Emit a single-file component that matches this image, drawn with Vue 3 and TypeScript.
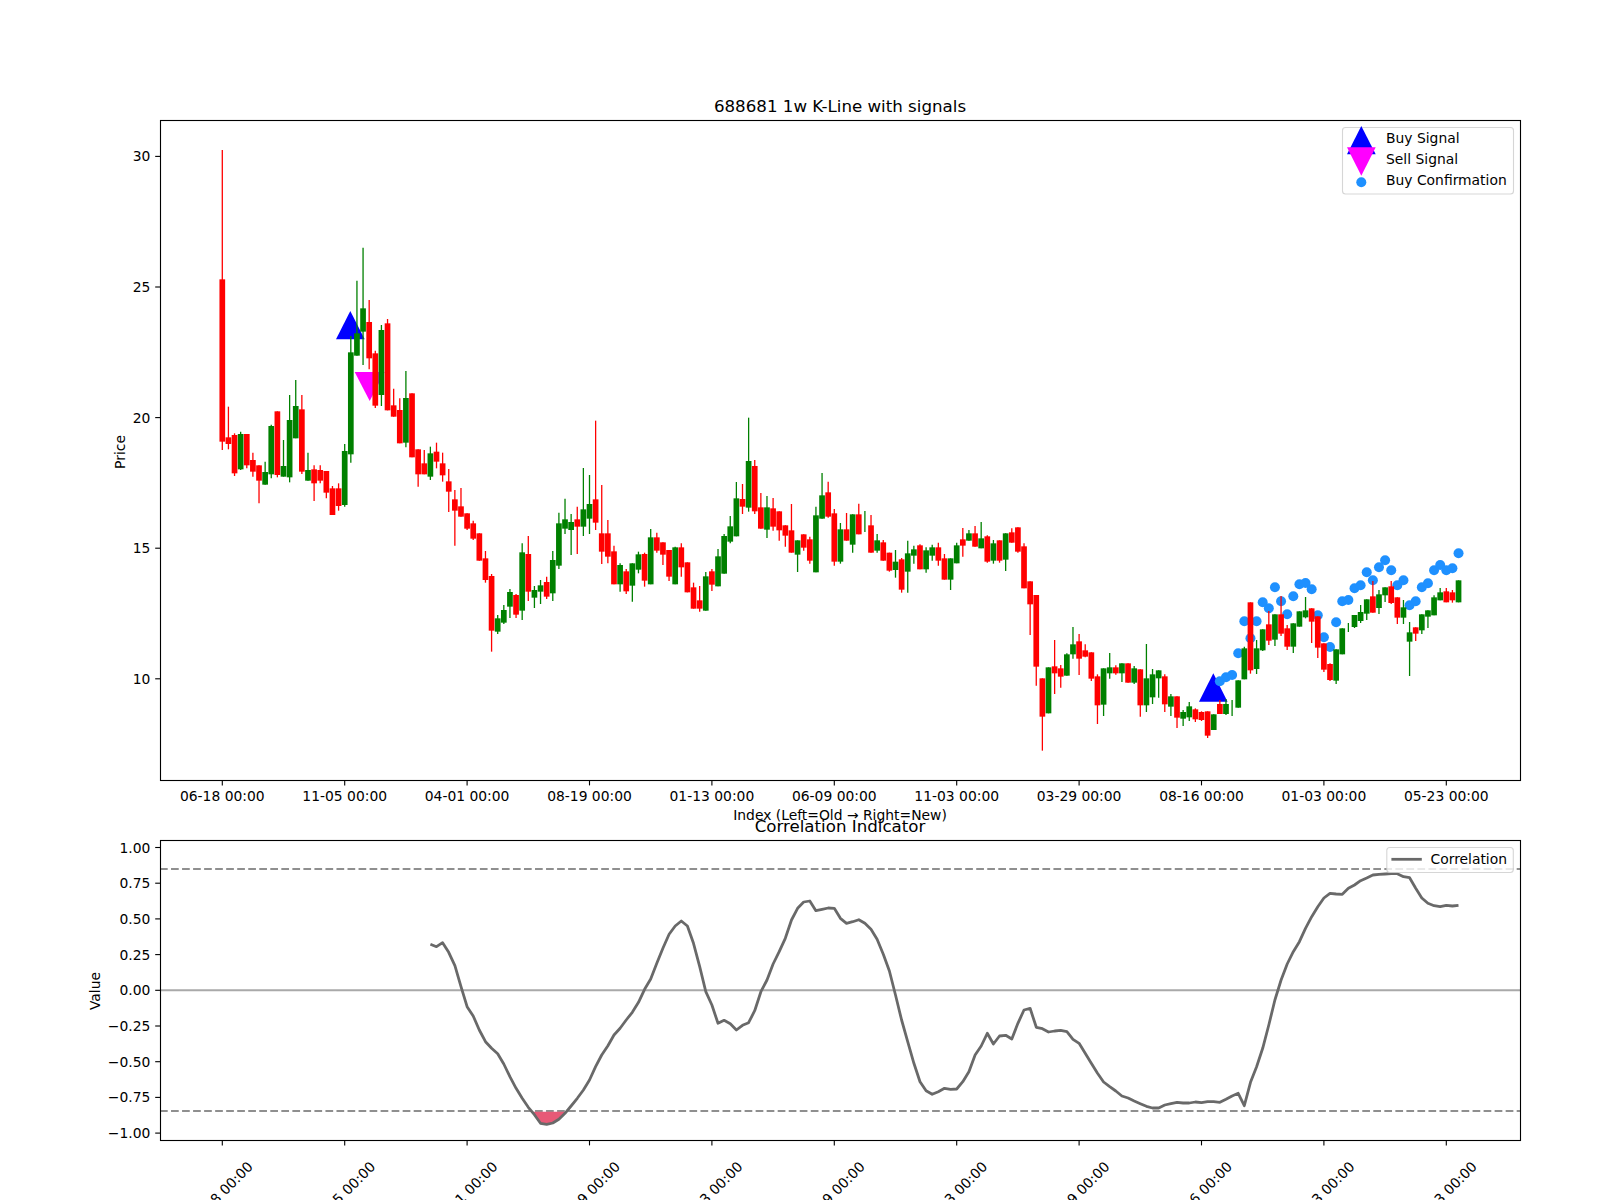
<script setup lang="ts">
type Candle = { x: number; up: boolean; top: number; bottom: number; wickTop: number; wickBottom: number }

const X0 = 222.3
const STEP = 6.12
const xAt = (i: number) => X0 + STEP * i

// Each block: first candle index, vertical origin, rows of "colour bodyTop bodyBottom wickTop wickBottom" (3x units)
const blocks: [number, number, string][] = [
  [0, 120, `r 478 965 90 990,r 952 972 860 988,r 945 1060 940 1068,g 942 1048 935 1050,r 942 1036 942 1045,r 1020 1055 998 1070,r 1036 1082 1036 1150,g 1056 1094 1025 1094,g 918 1063 914 1075,r 874 1065 874 1072,g 1038 1070 960 1070,g 900 1072 825 1087,g 858 955 780 955,r 868 1055 825 1062,g 1050 1082 998 1082,r 1048 1090 1036 1143,r 1050 1082 1036 1090,r 1053 1118 1053 1135,r 1105 1185 1098 1185,r 1105 1158 1090 1172,g 993 1155 972 1160,g 697 1003 648 1028,g 640 707 482 707,g 565 635 383 735,r 606 715 540 748,r 700 857 692 864,g 630 825 615 858,r 610 871 597 871,r 856 890 806 890,r 870 970 835 970,g 834 968 753 982,r 820 1012 820 1012,r 988 1063 988 1100,r 1030 1063 990 1063,g 1000 1070 980 1080,r 995 1025 968 1045,r 1030 1066 998 1085,r 1084 1115 1047 1176,r 1138 1172 1110 1277,r 1159 1190 1104 1190`],
  [40, 380, `r 400 446 400 450,r 430 476 422 480`],
  [42, 400, `r 400 482 400 482,r 475 540 453 548,r 528 692 522 755,g 655 695 645 702,g 630 668 615 672,g 576 620 567 654,r 585 644 582 654,g 457 632 430 660,r 462 575 408 603,g 570 593 558 624,g 556 575 540 612,r 546 590 530 597,g 480 580 453 603,g 370 497 338 507,g 358 386 296 402,g 366 390 342 465,r 358 380 320 462,g 328 380 204 408,g 312 356 225 402,r 298 368 62 390,r 400 455 255 492,r 400 470 360 490,r 454 553 437 553,g 495 553 490 575,r 514 574 507 582,g 490 557 490 605,g 463 509 455 520,r 462 542 458 560,g 412 553 387 553,r 412 452 398 458,r 427 464 427 495,r 450 530 450 543,g 442 553 440 553,r 442 502 430 530,r 487 577 487 577,r 562 626 548 626,r 601 626 558 635,g 529 632 516 632,r 514 554 507 573,g 469 559 447 559,g 408 521 402 521,g 379 425 348 430,g 295 409 246 409,r 297 320 252 342,g 183 323 53 335,r 198 334 180 342,r 322 386 279 386,g 322 389 288 414`],
  [90, 400, `r 325 380 294 392,r 334 391 334 422,r 376 407 376 440,r 391 458 312 458,g 421 464 421 516,r 403 443 403 452,r 418 482 410 491,g 346 517 320 517,g 286 356 219 356,r 277 350 245 353,r 340 485 327 497,g 388 485 369 491,r 388 422 339 422,g 343 434 343 458,r 343 403 311 403,g 0 0 333 396,r 376 458 345 458,g 421 452 402 458,r 427 482 420 482,r 458 512 458 515,g 485 510 450 533,r 478 569 474 578,g 460 515 422 578,g 448 467 437 491,r 436 508 433 508,g 451 508 442 518,g 442 467 434 482,r 442 482 428 497,r 475 539 462 539,g 475 539 475 570,g 436 490 428 490,r 418 437 384 470,g 400 422 390 422,r 400 440 378 440,g 415 445 366 445,r 409 485 406 488,g 430 482 420 491,r 421 482 421 488,g 400 479 400 513,r 397 428 385 428,r 382 455 382 458,r 439 565 430 565,r 544 613 544 705`],
  [133, 520, `r 225 440 225 497,r 475 590 475 692,g 442 580 442 580,r 439 460 360 522,r 445 470 435 503,g 403 467 400 467,g 373 403 321 416,r 364 416 342 465,r 391 410 373 412,r 397 476 397 483,r 469 556 463 612,g 445 554 445 588,g 442 460 399 476,r 442 460 436 464,g 430 460 430 486,r 430 488 430 488,g 445 488 438 492,r 448 556 448 590,g 475 556 372 576,g 463 532 447 552,g 451 475 451 533,r 469 553 463 576,g 529 560 522 588,r 529 593 529 624,g 576 596 570 618,g 559 592 546 603,r 568 598 565 606,r 576 600 574 603,r 574 647 574 654`],
  [162, 530, `g 553 600 553 600,r 522 552 510 552,g 522 552 507 555,g 0 0 510 558,g 451 533 451 533,g 355 448 350 448,r 217 421 217 431,g 355 417 330 432,g 298 361 298 363,r 283 332 243 345,g 253 329 253 348,r 253 311 198 318,r 295 350 285 360,g 280 350 280 369,g 244 290 244 290,g 241 262 201 265,r 235 275 235 339,r 259 353 259 384,r 340 419 340 426,r 402 450 400 453,g 358 452 358 462,g 295 373 295 373,g 0 0 279 306,g 255 291 255 294,g 246 273 225 279,g 208 251 208 270,r 199 248 153 248,g 193 234 180 252,g 172 196 172 216,r 169 219 153 222,r 202 263 202 282,g 232 263 210 282,g 307 335 276 438,r 292 311 292 333,g 253 301 253 312,g 241 260 241 294,g 202 256 196 256,g 187 211 174 211,r 184 217 174 217,r 187 211 180 218,g 151 217 151 217`],
]

const candles: Candle[] = blocks.flatMap(([start, oy, rows]) =>
  rows.split(',').map((row, n) => {
    const [c, a, b, d, e] = row.split(' ')
    const flat = a === '0'
    return {
      x: xAt(start + n),
      up: c === 'g',
      top: flat ? 0 : oy + Number(a) / 3,
      bottom: flat ? 0 : oy + Number(b) / 3,
      wickTop: oy + Number(d) / 3,
      wickBottom: oy + Number(e) / 3,
    }
  }),
)

// Buy confirmation markers, one for each candle from index 163
const dotYs = [454, 442, 435, 370, 274, 325, 274, 217, 235, 172, 214, 253, 199, 163, 159, 178, 256, 322, 351, 277, 214, 210, 175, 166, 127, 151, 112, 91, 121, 166, 151, 226, 214, 172, 160, 121, 105, 121, 115, 70]
const dots = dotYs.map((z, n) => ({ x: xAt(163 + n), y: 530 + z / 3 }))

const lineBlocks: [number, number, number[]][] = [
  [34, 770, [523, 530, 518, 547, 587, 650, 710, 738, 780, 815, 835, 851, 882, 920, 955, 985, 1012]],
  [51, 840, [824, 850, 853, 849, 838, 820, 798, 775, 750, 720, 680, 645, 617, 585, 565, 540, 517, 487, 448, 417, 370, 325, 283, 258, 243, 258, 310, 380, 455, 495, 550, 541, 551, 570, 556, 548, 512, 455, 420, 372, 335, 295, 240, 205, 186, 183, 212, 208, 204, 205, 235, 250, 245, 239, 250, 268, 298, 343, 393, 465, 540, 605, 670, 725, 752, 763, 755, 745, 748, 747, 725, 695, 645]],
  [124, 830, [648, 610, 642, 618, 616, 627, 580, 540, 535, 592, 596, 606, 603, 601, 605, 628, 640, 670, 700, 730, 756, 770, 783, 798, 804, 813, 821, 829, 834, 834, 825, 821, 817, 819, 819, 816, 818, 815, 815, 817, 808, 798, 790, 827, 757, 710, 655, 585, 510, 450, 402, 365, 335, 295, 260, 230, 204, 190, 192, 193, 175, 165, 152, 144, 135, 133, 132, 131, 131, 140, 143, 175, 204, 220, 227, 230, 226, 228, 226]],
]
const linePts = lineBlocks.flatMap(([start, oy, ys]) =>
  ys.map((z, n) => ({ i: start + n, x: xAt(start + n), y: oy + z / 3 })),
)
const corrLine = linePts.map((p) => `${p.x.toFixed(1)},${p.y.toFixed(1)}`).join(' ')
const redFill =
  '532.7,1111.7 ' +
  linePts
    .filter((p) => p.i >= 52 && p.i <= 56)
    .map((p) => `${p.x.toFixed(1)},${p.y.toFixed(1)}`)
    .join(' ') +
  ' 566,1111.7'

const dates = ['06-18', '11-05', '04-01', '08-19', '01-13', '06-09', '11-03', '03-29', '08-16', '01-03', '05-23']
const xTicks = dates.map((d, n) => ({ x: xAt(n * 20), label: `${d} 00:00` }))

const priceTicks = [30, 25, 20, 15, 10].map((v) => ({ y: 156.4 + (30 - v) * 26.12, label: String(v) }))
const corrTicks = [1, 0.75, 0.5, 0.25, 0, -0.25, -0.5, -0.75, -1].map((v) => ({
  y: 990.3 - v * 142.8,
  label: (v < 0 ? '\u2212' : '') + Math.abs(v).toFixed(2),
}))
</script>

<template>
  <div class="figure">
    <svg class="plot" width="1600" height="1200" viewBox="0 0 1600 1200">
      <!-- price panel -->
      <g class="markers">
        <polygon class="buy" points="350.3,311 336,339.3 364.7,339.3" />
        <polygon class="sell" points="369.7,401 354.7,372 384.7,372" />
        <polygon class="buy" points="1213.3,673.3 1199,701.7 1227.6,701.7" />
        <circle v-for="(d, n) in dots" :key="n" class="dot" :cx="d.x" :cy="d.y" r="5" />
      </g>
      <g v-for="(c, n) in candles" :key="n" :class="c.up ? 'up' : 'down'">
        <line class="wick" :x1="c.x" :x2="c.x" :y1="c.wickTop" :y2="c.wickBottom" />
        <rect v-if="c.bottom > c.top" class="body" :x="c.x - 2.85" :y="c.top" width="5.7" :height="c.bottom - c.top" />
      </g>

      <rect class="frame" x="160.5" y="120.5" width="1360" height="660" />
      <g v-for="t in xTicks" :key="t.label">
        <line class="tick" :x1="t.x" :x2="t.x" y1="781" y2="785.4" />
        <text class="label mid" :x="t.x" y="801">{{ t.label }}</text>
      </g>
      <g v-for="t in priceTicks" :key="t.label">
        <line class="tick" x1="155.2" x2="160" :y1="t.y" :y2="t.y" />
        <text class="label end" x="150.3" :y="t.y + 5">{{ t.label }}</text>
      </g>
      <text class="title mid" x="840" y="111.7">688681 1w K-Line with signals</text>
      <text class="label mid" x="840" y="820">Index (Left=Old → Right=New)</text>
      <text class="label mid" transform="translate(124.5 452) rotate(-90)">Price</text>

      <g class="legend">
        <rect class="legend-box" x="1342.5" y="127.5" width="171" height="66.5" rx="3" />
        <polygon class="buy" points="1361.3,126 1347,154.3 1375.7,154.3" />
        <polygon class="sell" points="1361.3,175.7 1347,147.3 1375.7,147.3" />
        <circle class="dot" cx="1361.3" cy="182.3" r="5" />
        <text class="label" x="1386" y="143.3">Buy Signal</text>
        <text class="label" x="1386" y="164.3">Sell Signal</text>
        <text class="label" x="1386" y="185">Buy Confirmation</text>
      </g>

      <!-- correlation panel -->
      <line class="zero" x1="160" x2="1520" y1="990.3" y2="990.3" />
      <line class="limit" x1="160" x2="1520" y1="869" y2="869" />
      <line class="limit" x1="160" x2="1520" y1="1111" y2="1111" />
      <polygon class="extreme" :points="redFill" />
      <polyline class="corr" :points="corrLine" />

      <rect class="frame" x="160.5" y="840.5" width="1360" height="300" />
      <g v-for="t in xTicks" :key="'c' + t.label">
        <line class="tick" :x1="t.x" :x2="t.x" y1="1141" y2="1145.4" />
        <text class="label mid" :x="t.x - 2" y="1199" :transform="`rotate(-45 ${t.x - 2} 1194)`">{{ t.label }}</text>
      </g>
      <g v-for="t in corrTicks" :key="t.label">
        <line class="tick" x1="155.2" x2="160" :y1="t.y" :y2="t.y" />
        <text class="label end" x="150.3" :y="t.y + 5">{{ t.label }}</text>
      </g>
      <text class="title mid" x="840" y="832.3">Correlation Indicator</text>
      <text class="label mid" transform="translate(99.5 991) rotate(-90)">Value</text>

      <g class="legend">
        <rect class="legend-box" x="1386.8" y="847.5" width="126.5" height="25" rx="3" />
        <line class="corr" x1="1391.4" x2="1421.8" y1="859.3" y2="859.3" />
        <text class="label" x="1430.5" y="864">Correlation</text>
      </g>
    </svg>
  </div>
</template>

<style scoped>
.figure {
  width: 1600px;
  height: 1200px;
  background: #ffffff;
  overflow: hidden;
}
.plot {
  display: block;
}
.label,
.title {
  font-family: "DejaVu Sans", sans-serif;
  fill: #000000;
}
.label {
  font-size: 13.89px;
}
.title {
  font-size: 16.67px;
}
.mid {
  text-anchor: middle;
}
.end {
  text-anchor: end;
}
.frame {
  fill: none;
  stroke: #000000;
  stroke-width: 1.11;
}
.tick {
  stroke: #000000;
  stroke-width: 1.11;
}
.buy {
  fill: #0000ff;
}
.sell {
  fill: #ff00ff;
}
.dot {
  fill: #1e90ff;
}
.up .wick {
  stroke: #008000;
}
.up .body {
  fill: #008000;
}
.down .wick {
  stroke: #ff0000;
}
.down .body {
  fill: #ff0000;
}
.wick {
  stroke-width: 1.3;
}
.legend-box {
  fill: #ffffff;
  fill-opacity: 0.8;
  stroke: #cccccc;
  stroke-opacity: 0.8;
  stroke-width: 1.11;
}
.zero {
  stroke: #a9a9a9;
  stroke-width: 2.08;
}
.limit {
  stroke: #8f8f8f;
  stroke-width: 2.08;
  stroke-dasharray: 7.7 3.33;
}
.extreme {
  fill: #e75a77;
}
.corr {
  fill: none;
  stroke: #696969;
  stroke-width: 2.78;
  stroke-linejoin: round;
}
</style>
